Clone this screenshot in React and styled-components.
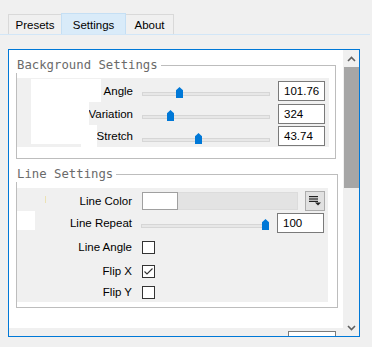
import React from 'react';
import styled, { createGlobalStyle } from 'styled-components';

const GlobalStyle = createGlobalStyle`
  html, body {
    margin: 0;
    padding: 0;
    background: #f0f0f0;
  }
  body {
    font-family: "Liberation Sans", Arial, sans-serif;
    font-size: 11.5px;
    color: #000;
  }
`;

const bgRows = [
  { label: 'Angle', value: '101.76', pos: 0.285, w: 34, h: 23 },
  { label: 'Variation', value: '324', pos: 0.21, w: 46, h: 23 },
  { label: 'Stretch', value: '43.74', pos: 0.44, w: 38, h: 22 },
];

const Slider = ({ pos }) => (
  <SliderBox>
    <Track />
    <Thumb style={{ left: `${Math.round(pos * 121)}px` }} />
  </SliderBox>
);

const Check = ({ checked }) => (
  <CheckBox>
    {checked && (
      <svg width="11" height="11" viewBox="0 0 11 11">
        <path d="M1.5 5.5 L4 8 L9.5 2.5" fill="none" stroke="#333" strokeWidth="1.1" />
      </svg>
    )}
  </CheckBox>
);

const Group = ({ title, $w, $pad, children }) => (
  <GroupBox $w={$w}>
    <GroupTitleRow>
      <GroupTitle>{title}</GroupTitle>
      <GroupRule />
    </GroupTitleRow>
    <GroupFrame $pad={$pad}>{children}</GroupFrame>
  </GroupBox>
);

const App = () => {
  return (
    <Window>
      <GlobalStyle />
      <TabStrip>
        <Tab $w={54}>Presets</Tab>
        <Tab $w={65} $active>Settings</Tab>
        <Tab $w={49}>About</Tab>
      </TabStrip>
      <Panel>
        <Content>
          <Group title="Background Settings" $w={320} $pad="5px 6px 11px 0">
            <GrayPanel>
              <Preview />
              <Rows $top={1}>
                {bgRows.map((r) => (
                  <Row key={r.label} $h={r.h} $white>
                    <Label $w={r.w}>{r.label}</Label>
                    <Controls>
                      <Slider pos={r.pos} />
                      <TextBox>{r.value}</TextBox>
                    </Controls>
                  </Row>
                ))}
              </Rows>
            </GrayPanel>
          </Group>
          <Group title="Line Settings" $w={322} $pad="6px 9px 5px 0">
            <GrayPanel $h={114}>
              <Side>
                <Mark />
                <Blank />
              </Side>
              <Rows $top={2}>
                <Row $h={21}>
                  <Label $w={87}>Line Color</Label>
                  <Controls>
                    <Swatch />
                    <ColorBar />
                    <DropButton>
                      <svg width="12" height="10" viewBox="0 0 12 10">
                        <rect x="0" y="0" width="9" height="1.2" fill="#222" />
                        <rect x="0" y="2.4" width="9" height="1.2" fill="#222" />
                        <rect x="0" y="4.8" width="9" height="1.2" fill="#222" />
                        <path d="M6 6.5 L12 6.5 L9 9.5 Z" fill="#222" />
                      </svg>
                    </DropButton>
                  </Controls>
                </Row>
                <Row $h={23}>
                  <Label $w={87}>Line Repeat</Label>
                  <Controls>
                    <Slider pos={1} />
                    <TextBox>100</TextBox>
                  </Controls>
                </Row>
                <Row $h={26}>
                  <Label $w={87}>Line Angle</Label>
                  <Check />
                </Row>
                <Row $h={22}>
                  <Label $w={87}>Flip X</Label>
                  <Check checked />
                </Row>
                <Row $h={20}>
                  <Label $w={87}>Flip Y</Label>
                  <Check />
                </Row>
              </Rows>
            </GrayPanel>
          </Group>
          <NextStrip>
            <PeekBox />
          </NextStrip>
        </Content>
        <ScrollBar>
          <ArrowButton>
            <svg width="9" height="6" viewBox="0 0 9 6">
              <polyline points="1,5 4.5,1.5 8,5" fill="none" stroke="#606060" strokeWidth="1.6" />
            </svg>
          </ArrowButton>
          <ScrollThumb />
          <ScrollSpace />
          <ArrowButton>
            <svg width="9" height="6" viewBox="0 0 9 6">
              <polyline points="1,1 4.5,4.5 8,1" fill="none" stroke="#606060" strokeWidth="1.6" />
            </svg>
          </ArrowButton>
        </ScrollBar>
      </Panel>
    </Window>
  );
};

export default App;

const Window = styled.div`
  width: 372px;
  height: 347px;
  overflow: hidden;
  background: #f0f0f0;
  display: flex;
  flex-direction: column;
`;

const TabStrip = styled.div`
  display: flex;
  align-items: flex-end;
  height: 34px;
  padding-left: 8px;
  margin-right: 2px;
  border-bottom: 1px solid #d2e6f7;
`;

const Tab = styled.div`
  box-sizing: border-box;
  width: ${(p) => p.$w}px;
  height: ${(p) => (p.$active ? 21 : 20)}px;
  margin-right: -1px;
  display: flex;
  align-items: center;
  justify-content: center;
  padding-top: ${(p) => (p.$active ? 1 : 0)}px;
  background: ${(p) => (p.$active ? '#d9ebf9' : '#f0f0f0')};
  border: 1px solid ${(p) => (p.$active ? '#c5dff4' : '#d9d9d9')};
  border-bottom: none;
  font-size: 11.5px;
  color: #000;
  position: relative;
  z-index: ${(p) => (p.$active ? 1 : 0)};
`;

const Panel = styled.div`
  margin: 14px 0 0 8px;
  width: 352px;
  height: 288px;
  box-sizing: border-box;
  border: 1px solid #0078d7;
  display: flex;
`;

const Content = styled.div`
  width: 334px;
  height: 286px;
  overflow: hidden;
  background: #fff;
  padding: 7px 0 0 7px;
  box-sizing: border-box;
  display: flex;
  flex-direction: column;
`;

const GroupBox = styled.div`
  width: ${(p) => p.$w}px;
  display: flex;
  flex-direction: column;
  & + & {
    margin-top: 7px;
  }
`;

const GroupTitleRow = styled.div`
  display: flex;
  height: 16px;
  padding-left: 1px;
`;

const GroupTitle = styled.span`
  font-family: "DejaVu Sans Mono", "Liberation Mono", monospace;
  font-size: 12.3px;
  line-height: 16px;
  color: #6a6a6a;
  white-space: nowrap;
`;

const GroupRule = styled.div`
  flex: 1;
  align-self: flex-end;
  height: 8px;
  box-sizing: border-box;
  margin-left: 3px;
  border-top: 1px solid #bdbdbd;
  border-right: 1px solid #bdbdbd;
`;

const GroupFrame = styled.div`
  border: 1px solid #bdbdbd;
  border-top: none;
  padding: ${(p) => p.$pad};
`;

const GrayPanel = styled.div`
  display: flex;
  align-items: flex-start;
  background: #f0f0f0;
  height: ${(p) => (p.$h ? `${p.$h}px` : 'auto')};
  overflow: hidden;
`;

const Preview = styled.div`
  margin: 1px 0 0 14px;
  width: 50px;
  height: 65px;
  background: #fff;
`;

const Side = styled.div`
  width: 30px;
  flex-shrink: 0;
  display: flex;
  flex-direction: column;
`;

const Mark = styled.div`
  margin: 8px 0 0 28px;
  width: 1px;
  height: 7px;
  background: #ece2b4;
`;

const Blank = styled.div`
  margin-top: 8px;
  width: 18px;
  height: 19px;
  background: #fff;
`;

const Rows = styled.div`
  flex: 1;
  min-width: 0;
  display: flex;
  flex-direction: column;
  padding-top: ${(p) => p.$top}px;
`;

const Row = styled.div`
  display: flex;
  align-items: center;
  justify-content: ${(p) => (p.$white ? 'flex-end' : 'flex-start')};
  height: ${(p) => p.$h}px;
  overflow: hidden;
  background: ${(p) => (p.$white ? '#fff' : '#f0f0f0')};
`;

const Label = styled.div`
  width: ${(p) => p.$w}px;
  flex-shrink: 0;
  align-self: stretch;
  display: flex;
  align-items: center;
  justify-content: flex-end;
  box-sizing: border-box;
  padding-right: 2px;
  white-space: nowrap;
  overflow: hidden;
  background: #f0f0f0;
`;

const Controls = styled.div`
  width: 194px;
  flex-shrink: 0;
  align-self: stretch;
  display: flex;
  align-items: center;
  background: #f0f0f0;
`;

const SliderBox = styled.div`
  position: relative;
  margin-left: 7px;
  width: 128px;
  align-self: stretch;
`;

const Track = styled.div`
  position: absolute;
  left: 0;
  right: 0;
  top: 13px;
  height: 4px;
  box-sizing: border-box;
  background: #e7e7e7;
  border: 1px solid #d6d6d6;
`;

const Thumb = styled.div`
  position: absolute;
  top: 8px;
  width: 7px;
  height: 11px;
  background: #0078d7;
  clip-path: polygon(50% 0, 100% 30%, 100% 100%, 0 100%, 0 30%);
`;

const TextBox = styled.div`
  margin-left: 8px;
  width: 47px;
  height: 20px;
  box-sizing: border-box;
  border: 1px solid #7a7a7a;
  background: #fff;
  padding-left: 5px;
  line-height: 18px;
  font-size: 11.5px;
`;

const Swatch = styled.div`
  margin-left: 8px;
  width: 36px;
  height: 18px;
  box-sizing: border-box;
  border: 1px solid #a0a0a0;
  background: #fff;
`;

const ColorBar = styled.div`
  width: 120px;
  height: 18px;
  box-sizing: border-box;
  background: #e3e3e3;
  border: 1px solid #dcdcdc;
  border-left: none;
`;

const DropButton = styled.div`
  margin-left: 7px;
  width: 20px;
  height: 20px;
  box-sizing: border-box;
  background: #e1e1e1;
  border: 1px solid #adadad;
  display: flex;
  align-items: center;
  justify-content: center;
  padding-top: 1px;
`;

const CheckBox = styled.div`
  margin-left: 8px;
  width: 13px;
  height: 13px;
  box-sizing: border-box;
  border: 1px solid #333;
  background: #fff;
  display: flex;
  align-items: center;
  justify-content: center;
`;

const NextStrip = styled.div`
  margin: 20px 0 0 -7px;
  height: 20px;
  flex-shrink: 0;
  background: #f0f0f0;
  display: flex;
  padding: 3px 0 0 279px;
`;

const PeekBox = styled.div`
  width: 48px;
  height: 20px;
  box-sizing: border-box;
  border: 1px solid #7a7a7a;
  background: #fff;
`;

const ScrollBar = styled.div`
  width: 16px;
  background: #f0f0f0;
  display: flex;
  flex-direction: column;
  align-items: center;
`;

const ArrowButton = styled.div`
  height: 17px;
  width: 16px;
  display: flex;
  align-items: center;
  justify-content: center;
`;

const ScrollThumb = styled.div`
  width: 15px;
  height: 121px;
  background: #a6a6a6;
`;

const ScrollSpace = styled.div`
  flex: 1;
`;
